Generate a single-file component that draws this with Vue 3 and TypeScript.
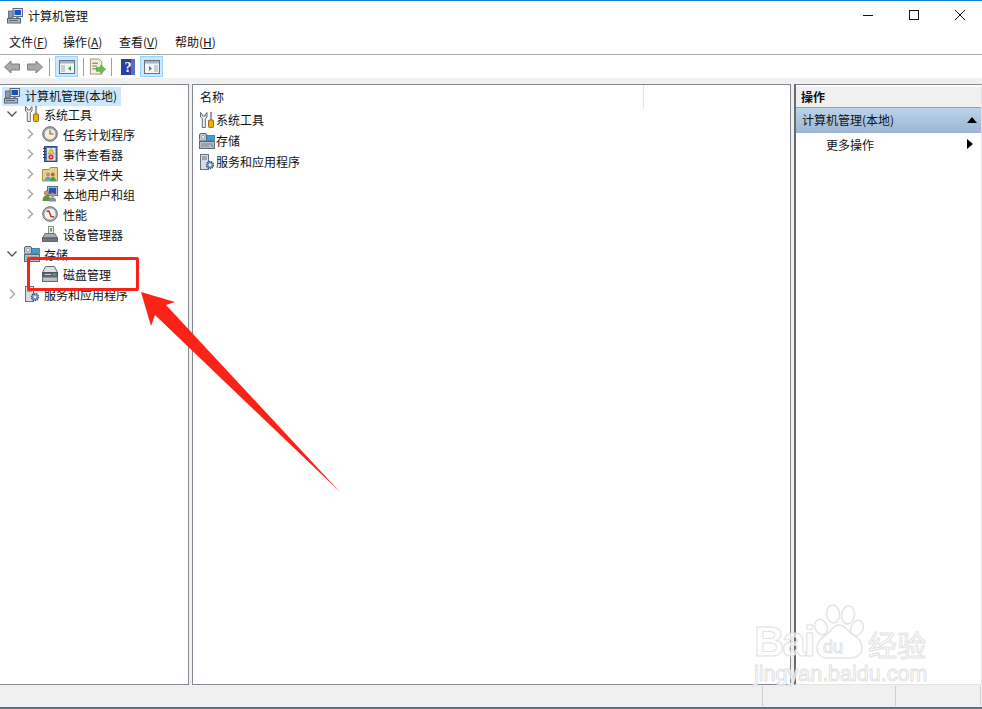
<script setup lang="ts">
interface Node {
  label: string
  icon: string
  level: number
  chevron?: 'open' | 'closed'
  selected?: boolean
}

const menus = [
  { name: '文件', key: 'F' },
  { name: '操作', key: 'A' },
  { name: '查看', key: 'V' },
  { name: '帮助', key: 'H' }
]

const tree: Node[] = [
  { label: '计算机管理(本地)', icon: 'computer', level: 0, selected: true },
  { label: '系统工具', icon: 'tools', level: 1, chevron: 'open' },
  { label: '任务计划程序', icon: 'clock', level: 2, chevron: 'closed' },
  { label: '事件查看器', icon: 'log', level: 2, chevron: 'closed' },
  { label: '共享文件夹', icon: 'share', level: 2, chevron: 'closed' },
  { label: '本地用户和组', icon: 'users', level: 2, chevron: 'closed' },
  { label: '性能', icon: 'perf', level: 2, chevron: 'closed' },
  { label: '设备管理器', icon: 'device', level: 2 },
  { label: '存储', icon: 'storage', level: 1, chevron: 'open' },
  { label: '磁盘管理', icon: 'disk', level: 2 },
  { label: '服务和应用程序', icon: 'services', level: 1, chevron: 'closed' }
]

const list = [
  { label: '系统工具', icon: 'tools' },
  { label: '存储', icon: 'storage' },
  { label: '服务和应用程序', icon: 'services' }
]
</script>

<template>
  <div class="window">
    <svg class="defs" width="0" height="0">
      <defs>
        <symbol id="computer" viewBox="0 0 16 16">
          <rect x="6" y="0.5" width="9.5" height="8" fill="#dfe6f0" stroke="#5a6a80" />
          <rect x="7.500" y="2" width="6.500" height="5" fill="#1d4fc4" />
          <rect x="9" y="8.500" width="3" height="2" fill="#7d8794" />
          <rect x="1.500" y="3" width="4.500" height="7" fill="#8f99a5" stroke="#4f5a66" stroke-width="0.7" />
          <rect x="0.500" y="10.500" width="13" height="4.500" fill="#aeb6be" stroke="#5c6670" />
          <path d="M2 12.500h9" stroke="#5c6670" />
        </symbol>
        <symbol id="tools" viewBox="0 0 16 16">
          <path d="M1.500 0.500v4.500l1.800 1.500V15.500h3V6.500L8 5V0.500L6.300 2.200V4H3.300V2.200z" fill="#f1f3f4" stroke="#55595d" stroke-width="0.9" />
          <rect x="11.200" y="0.500" width="1.600" height="8" fill="#b9bec3" stroke="#6a6f74" stroke-width="0.5" />
          <rect x="9.500" y="8" width="5" height="7.500" rx="1" fill="#f0ae0c" stroke="#7a5600" stroke-width="0.8" />
        </symbol>
        <symbol id="clock" viewBox="0 0 16 16">
          <circle cx="8" cy="8" r="7.300" fill="#a3a9af" stroke="#666c72" />
          <circle cx="8" cy="8" r="5.300" fill="#f8eed6" />
          <path d="M8 3.800V8h3.500" fill="none" stroke="#6b6455" stroke-width="1.100" />
        </symbol>
        <symbol id="log" viewBox="0 0 16 16">
          <rect x="2.500" y="0.500" width="12.500" height="15" fill="#5679ad" stroke="#2e4a78" />
          <rect x="5" y="2" width="8.500" height="12.500" fill="#dbe3ee" />
          <path d="M1 2.500h3M1 5.500h3M1 8.500h3M1 11.500h3" stroke="#39404a" />
          <path d="M9.200 2.500l3.300 5.500H6z" fill="#f4c92e" stroke="#a27a08" stroke-width="0.5" />
          <circle cx="9" cy="11" r="2.600" fill="#d3302a" />
          <circle cx="9" cy="11" r="0.900" fill="#f5dcd9" />
        </symbol>
        <symbol id="share" viewBox="0 0 16 16">
          <path d="M0.500 3.500V15h15V1.500H8.500L7 3.500z" fill="#ecd088" stroke="#a98a3e" />
          <circle cx="6" cy="8.500" r="1.900" fill="#b88d62" />
          <path d="M2.500 14.500c0-2.600 1.600-3.700 3.400-3.700s3.200 1.100 3.200 3.700z" fill="#4fa8c2" />
          <circle cx="10.800" cy="8.500" r="1.900" fill="#9a7650" />
          <path d="M8.300 15c0-2.600 1-3.900 2.600-3.900s3 1.300 3 3.900z" fill="#4d9a5a" />
        </symbol>
        <symbol id="users" viewBox="0 0 16 16">
          <rect x="5.500" y="0.500" width="10" height="9" fill="#c8d0da" stroke="#5f6d80" />
          <rect x="6.800" y="1.800" width="7.400" height="6.400" fill="#2654b8" />
          <circle cx="4.500" cy="7" r="2.300" fill="#c99a6f" stroke="#75593e" stroke-width="0.5" />
          <path d="M0.500 15c0-3.800 1.600-5.500 4-5.500s4 1.700 4 5.500z" fill="#5f9245" />
          <circle cx="10.500" cy="9" r="2.200" fill="#c4926a" />
          <path d="M6.800 15.500c0-3 1.500-4.300 3.700-4.300s3.700 1.300 3.700 4.300z" fill="#7c8ca4" />
        </symbol>
        <symbol id="perf" viewBox="0 0 16 16">
          <circle cx="8" cy="8" r="7.300" fill="#b2b7bb" stroke="#62686e" />
          <circle cx="8" cy="8" r="5.300" fill="#fbf8f2" />
          <path d="M4.500 5.500L7 5l2 5.500 3 .5" fill="none" stroke="#d22a24" stroke-width="1.500" />
        </symbol>
        <symbol id="device" viewBox="0 0 16 16">
          <rect x="6.500" y="0.500" width="5" height="7.500" fill="#eef0f1" stroke="#6d757c" stroke-width="0.8" />
          <rect x="8" y="2" width="2" height="3.500" fill="#5fae57" />
          <path d="M3 7.500h10l2.500 4.500h-15z" fill="#a5acb3" stroke="#59626a" stroke-width="0.8" />
          <rect x="0.500" y="12" width="15" height="3.500" fill="#6f7780" stroke="#4b535b" stroke-width="0.8" />
        </symbol>
        <symbol id="storage" viewBox="0 0 16 16">
          <rect x="0.500" y="0.500" width="7" height="7.500" rx="1.500" fill="#c3cad1" stroke="#5f6871" />
          <circle cx="4" cy="4" r="1.700" fill="#e8edf1" stroke="#7d8791" stroke-width="0.6" />
          <rect x="7.500" y="2.500" width="8" height="5" fill="#3f9ccf" stroke="#276b92" stroke-width="0.7" />
          <rect x="0.500" y="8.500" width="15" height="7" fill="#b9c0c7" stroke="#5f6871" />
          <path d="M2 11h12M2 13h8" stroke="#7d8791" />
          <rect x="12" y="12.200" width="2" height="1.600" fill="#4fb248" />
        </symbol>
        <symbol id="disk" viewBox="0 0 16 16">
          <path d="M3.500 0.500h9l3 6h-15z" fill="#dde0e3" stroke="#656d74" />
          <rect x="0.500" y="6.500" width="15" height="4.500" fill="#5f676f" stroke="#4e565d" />
          <rect x="0.500" y="11" width="15" height="4.500" fill="#b6bcc2" stroke="#656d74" />
          <rect x="11.500" y="7.500" width="2" height="2" fill="#58c14d" />
          <path d="M3 8.500h6M3 13h9" stroke="#c7ccd0" />
        </symbol>
        <symbol id="services" viewBox="0 0 16 16">
          <rect x="1.500" y="0.500" width="8" height="15" fill="#d6dce2" stroke="#6a737c" />
          <path d="M3 3h5M3 5h5" stroke="#6a737c" />
          <circle cx="11" cy="11" r="3.600" fill="#6f8fb5" stroke="#3f5b80" stroke-dasharray="1.400 0.800" stroke-width="1.200" />
          <circle cx="11" cy="11" r="1.400" fill="#eef2f6" />
        </symbol>
      </defs>
    </svg>

    <header class="titlebar">
      <svg class="icon title-icon"><use href="#computer" /></svg>
      <span class="title">计算机管理</span>
      <div class="controls">
        <svg class="ctl" viewBox="0 0 46 20"><path d="M18 10.500h10" stroke="#111" fill="none" /></svg>
        <svg class="ctl" viewBox="0 0 46 20"><rect x="18.500" y="5.500" width="9" height="9" stroke="#111" fill="none" /></svg>
        <svg class="ctl" viewBox="0 0 46 20"><path d="M18 5l10 10M28 5L18 15" stroke="#111" fill="none" /></svg>
      </div>
    </header>

    <nav class="menubar">
      <span v-for="m in menus" :key="m.key" class="menu">{{ m.name }}(<u>{{ m.key }}</u>)</span>
    </nav>

    <div class="toolbar">
      <svg class="tb arrow" viewBox="0 0 16 14"><path d="M0.500 7L7 1v3h8.500v6H7v3z" fill="#a9a9a9" stroke="#7e7e7e" /></svg>
      <svg class="tb arrow gap-fwd" viewBox="0 0 16 14"><path d="M15.500 7L9 1v3H0.500v6H9v3z" fill="#a9a9a9" stroke="#7e7e7e" /></svg>
      <i class="sep sep-a"></i>
      <span class="tbtn">
        <svg class="icon" viewBox="0 0 16 16">
          <rect x="0.500" y="1.500" width="15" height="13" fill="#f3f5f7" stroke="#67727d" />
          <rect x="1" y="2" width="14" height="2.500" fill="#9fb3c8" />
          <rect x="2" y="6" width="4" height="7" fill="#c4ced8" />
          <path d="M12 7v5l-3-2.500z" fill="#2f9e44" />
        </svg>
      </span>
      <i class="sep sep-b"></i>
      <svg class="doc" viewBox="0 0 18 18">
        <path d="M1.500 0.500h9l3 3v13h-12z" fill="#f4eed9" stroke="#9a9480" />
        <path d="M3.500 5h6M3.500 8h5M3.500 11h5" stroke="#6b6b60" />
        <path d="M8 9.500h4.500V7l5 4.500-5 4.500v-2.500H8z" fill="#6cc04a" stroke="#3f8a2a" stroke-width="0.6" />
      </svg>
      <i class="sep sep-c"></i>
      <svg class="help" viewBox="0 0 14 16">
        <rect width="14" height="16" fill="#2b3f9e" />
        <rect x="10" width="4" height="16" fill="#5a6dc0" />
        <text x="7" y="13" text-anchor="middle" class="help-q">?</text>
      </svg>
      <span class="tbtn tbtn-r">
        <svg class="icon" viewBox="0 0 16 16">
          <rect x="0.500" y="1.500" width="15" height="13" fill="#f3f5f7" stroke="#67727d" />
          <rect x="1" y="2" width="14" height="2.500" fill="#9fb3c8" />
          <rect x="10" y="6" width="4" height="7" fill="#c4ced8" />
          <path d="M5 7v5l3-2.500z" fill="#2f9e44" />
        </svg>
      </span>
    </div>

    <main class="panes">
      <section class="pane pane-tree">
        <div
          v-for="n in tree"
          :key="n.label"
          class="node"
          :class="['lv' + n.level, { selected: n.selected }]"
        >
          <svg v-if="n.chevron" class="chev" viewBox="0 0 12 12">
            <path v-if="n.chevron === 'open'" d="M1.500 3.500L6 8l4.500-4.500" fill="none" stroke="#555" stroke-width="1.400" />
            <path v-else d="M4 1.500L8.500 6 4 10.500" fill="none" stroke="#a6a6a6" stroke-width="1.400" />
          </svg>
          <span v-else-if="n.level > 0" class="chev"></span>
          <svg class="icon"><use :href="'#' + n.icon" /></svg>
          <span class="label">{{ n.label }}</span>
        </div>
      </section>

      <section class="pane pane-list">
        <div class="list-head">
          <span class="col-name">名称</span>
        </div>
        <div v-for="row in list" :key="row.label" class="list-row">
          <svg class="icon"><use :href="'#' + row.icon" /></svg>
          <span>{{ row.label }}</span>
        </div>
      </section>

      <aside class="pane pane-actions">
        <div class="act-head">操作</div>
        <div class="act-group">
          <span>计算机管理(本地)</span>
          <svg class="tri" viewBox="0 0 10 6"><path d="M5 0l5 6H0z" fill="#000" /></svg>
        </div>
        <div class="act-item">
          <span>更多操作</span>
          <svg class="tri-r" viewBox="0 0 6 10"><path d="M0 0l6 5-6 5z" fill="#000" /></svg>
        </div>
      </aside>
    </main>

    <footer class="status">
      <i class="cell cell-a"></i>
      <i class="cell cell-b"></i>
      <i class="cell cell-c"></i>
    </footer>
    <div class="taskline"></div>

    <!-- Annotation drawn over the screenshot -->
    <div class="callout"></div>
    <svg class="arrow-note" viewBox="0 0 982 709">
      <path d="M141 292L175 302L166 305L340 492L155 315L151 326z" fill="#fb2317" />
    </svg>

    <!-- Watermark -->
    <div class="watermark">
      <svg class="paw" viewBox="0 0 56 66">
        <g fill="#fff" fill-opacity="0.6" stroke="#e4e4e4" stroke-width="1.500">
          <ellipse cx="7" cy="25" rx="6" ry="8" transform="rotate(-25 7 25)" />
          <ellipse cx="19" cy="12" rx="6.500" ry="9" transform="rotate(-6 19 12)" />
          <ellipse cx="34" cy="13" rx="6.500" ry="9" transform="rotate(6 34 13)" />
          <ellipse cx="43" cy="26" rx="6" ry="8" transform="rotate(25 43 26)" />
          <path d="M25 23c6 0 8 6 13 9 6 3 10 8 10 14 0 7-6 10-12 10H14C8 56 3 53 3 46c0-6 4-10 9-13 5-3 7-10 13-10z" />
        </g>
      </svg>
      <span class="wm wm-bai">Bai</span>
      <span class="wm wm-du">du</span>
      <span class="wm wm-jy">经验</span>
      <span class="wm wm-url">jingyan.baidu.com</span>
    </div>
  </div>
</template>

<style>
html, body { margin: 0; background: #f0f0f0; overflow: hidden; }
</style>

<style scoped>
.window {
  position: relative;
  width: 982px;
  height: 709px;
  overflow: hidden;
  display: flex;
  flex-direction: column;
  background: #f0f0f0;
  font-family: "Noto Sans CJK SC", "Liberation Sans", sans-serif;
  font-size: 12px;
  color: #111;
}
.defs { position: absolute; }
.icon { width: 16px; height: 16px; flex: none; display: block; }

.titlebar {
  height: 29px;
  flex: none;
  display: flex;
  align-items: center;
  padding-left: 7px;
  background: #fff;
  border-top: 1px solid #0f7fd8;
  box-sizing: content-box;
}
.title { margin-left: 5px; }
.controls { margin-left: auto; display: flex; margin-right: -1px; margin-top: -2px; }
.ctl { width: 46px; height: 20px; display: block; }

.menubar {
  flex: none;
  display: flex;
  align-items: center;
  gap: 17px;
  padding-left: 9px;
  background: #fff;
  border-bottom: 1px solid #a9a9a9;
  padding-bottom: 1px;
  box-sizing: border-box;
  height: 25px;
}
.menu { width: 39px; white-space: nowrap; }
.menu:first-child { width: 37px; }

.toolbar {
  height: 23px;
  flex: none;
  display: flex;
  align-items: center;
  background: #fff;
  padding-left: 4px;
  box-sizing: border-box;
}
.tb { width: 16px; height: 14px; display: block; }
.gap-fwd { margin-left: 7px; }
.sep { width: 1px; height: 18px; background: #a0a0a0; display: block; flex: none; }
.sep-a { margin: 0 5px 0 6px; }
.sep-b { margin: 0 5px; }
.sep-c { margin: 0 9px 0 5px; }
.tbtn {
  width: 23px;
  height: 21px;
  box-sizing: border-box;
  display: flex;
  align-items: center;
  justify-content: center;
  background: #cce8ff;
  border: 1px solid #99d1ff;
}
.tbtn-r { margin-left: 5px; }
.doc { width: 17px; height: 18px; display: block; flex: none; }
.help { width: 14px; height: 16px; display: block; }
.help-q { font-family: "Liberation Serif", serif; font-size: 14px; font-weight: 700; fill: #fff; }

.panes {
  flex: 1;
  min-height: 0;
  display: flex;
  padding-top: 6px;
}
.pane {
  background: #fff;
  border: 1px solid #828790;
  box-sizing: border-box;
}
.pane-tree {
  width: 189px;
  padding: 2px 0 0 1px;
  border-left: 0;
}
.node {
  height: 20px;
  display: flex;
  align-items: center;
  white-space: nowrap;
  padding-bottom: 2px;
  box-sizing: border-box;
}
.node .label { margin-left: 4px; }
.lv0 { height: 19px; width: 119px; margin-left: 1px; padding-left: 2px; margin-bottom: -1px; }
.lv0 .label { margin-left: 5px; }
.lv1 { padding-left: 5px; }
.lv1 .chev { margin-right: 6px; }
.lv1 .label { margin-left: 4px; }
.lv2 { padding-left: 23px; }
.lv2 .chev { margin-right: 6px; }
.lv2 .label { margin-left: 5px; }
.selected { background: #cce8ff; }
.chev { width: 12px; height: 12px; flex: none; display: block; }

.pane-list {
  width: 599px;
  margin-left: 3px;
}
.list-head {
  height: 24px;
  display: flex;
  align-items: center;
  padding-left: 7px;
  box-sizing: border-box;
  position: relative;
}
.col-name {
  width: 443px;
  height: 24px;
  line-height: 24px;
  border-right: 1px solid #e5e5e5;
  flex: none;
}
.list-row {
  height: 21px;
  display: flex;
  align-items: center;
  padding-left: 6px;
  gap: 1px;
  white-space: nowrap;
}

.pane-actions {
  flex: 1;
  margin-left: 3px;
  border-color: #828790 #e3e3e3 #e3e3e3 #6a6a6a;
  border-left-width: 2px;
  padding-top: 2px;
}
.act-head {
  height: 20px;
  line-height: 20px;
  padding-left: 5px;
  font-weight: 700;
  background: #f0f0f0;
  border-bottom: 1px solid #a0a0a0;
  box-sizing: content-box;
}
.act-group {
  height: 25px;
  display: flex;
  align-items: center;
  padding: 0 4px 2px 6px;
  box-sizing: border-box;
  background: linear-gradient(#bcd3ea, #9ab5d4);
}
.tri { width: 10px; height: 6px; margin-left: auto; display: block; }
.act-item {
  height: 22px;
  display: flex;
  align-items: center;
  padding-left: 30px;
  padding-right: 8px;
}
.tri-r { width: 6px; height: 10px; margin-left: auto; display: block; }

.status {
  height: 22px;
  flex: none;
  display: flex;
  background: #f0f0f0;
  padding: 1px 0 1px;
  box-sizing: border-box;
  justify-content: flex-end;
}
.cell { display: block; border-left: 1px solid #d0d0d0; flex: none; }
.cell-a { width: 132px; }
.cell-b { width: 84px; }
.cell-c { width: 1px; }
.taskline {
  height: 2px;
  flex: none;
  background: linear-gradient(#2b78b8 0 1px, #5f7486 1px);
}

.callout {
  position: absolute;
  left: 27px;
  top: 257px;
  width: 112px;
  height: 34px;
  box-sizing: border-box;
  border: 3px solid #fb2317;
  border-radius: 2px;
}
.arrow-note {
  position: absolute;
  left: 0;
  top: 0;
  width: 982px;
  height: 709px;
  pointer-events: none;
}

.watermark {
  position: absolute;
  left: 752px;
  top: 600px;
  width: 180px;
  height: 100px;
  pointer-events: none;
}
.paw { position: absolute; left: 62px; top: 2px; width: 56px; height: 66px; }
.wm {
  position: absolute;
  color: rgba(255, 255, 255, 0.7);
  -webkit-text-stroke: 1px #e2e2e2;
  font-family: "Liberation Sans", "Noto Sans CJK SC", sans-serif;
  white-space: nowrap;
}
.wm-bai { left: 2px; top: 24px; font-size: 42px; line-height: 36px; font-weight: 700; letter-spacing: -2px; }
.wm-du { left: 71px; top: 38px; font-size: 18px; line-height: 18px; }
.wm-jy { left: 116px; top: 28px; font-size: 29px; line-height: 32px; font-family: "Noto Sans CJK SC", sans-serif; }
.wm-url { left: 2px; top: 63px; font-size: 21.500px; line-height: 22px; }
</style>
